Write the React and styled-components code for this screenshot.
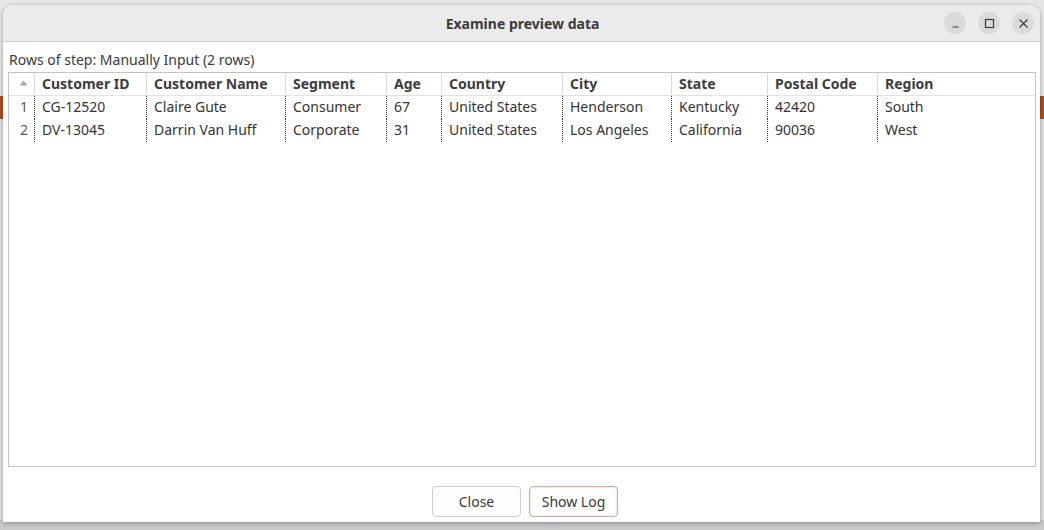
import React from 'react'
import styled, { createGlobalStyle } from 'styled-components'

const GlobalStyle = createGlobalStyle`
  html, body {
    margin: 0;
    padding: 0;
  }
  body {
    font-family: "Noto Sans", "Open Sans", "Liberation Sans", sans-serif;
    font-size: 14px;
    color: #333;
  }
`;

const columns = [
  { key: 'id', label: 'Customer ID' },
  { key: 'name', label: 'Customer Name' },
  { key: 'segment', label: 'Segment' },
  { key: 'age', label: 'Age' },
  { key: 'country', label: 'Country' },
  { key: 'city', label: 'City' },
  { key: 'state', label: 'State' },
  { key: 'postal', label: 'Postal Code' },
  { key: 'region', label: 'Region' },
];

const rows = [
  { id: 'CG-12520', name: 'Claire Gute', segment: 'Consumer', age: '67', country: 'United States', city: 'Henderson', state: 'Kentucky', postal: '42420', region: 'South' },
  { id: 'DV-13045', name: 'Darrin Van Huff', segment: 'Corporate', age: '31', country: 'United States', city: 'Los Angeles', state: 'California', postal: '90036', region: 'West' },
];

const GRID = '26px 112px 139px 101px 55px 121px 109px 96px 110px 1fr';

const Page = styled.div`
  width: 1044px;
  height: 530px;
  box-sizing: border-box;
  display: flex;
  padding: 5px 4px 8px 3px;
  overflow: hidden;
  background: linear-gradient(
    to bottom,
    #e6e6e6 0 96px,
    #b24a22 96px 119px,
    #e0e0e0 119px 520px,
    #c9c9c9 520px
  );
`;

const Dialog = styled.div`
  flex: 1;
  display: flex;
  flex-direction: column;
  background: #fff;
  border-radius: 10px 10px 0 0;
  box-shadow: 0 1px 4px rgba(0, 0, 0, 0.35);
  overflow: hidden;
`;

const TitleBar = styled.div`
  height: 36px;
  flex: none;
  display: grid;
  grid-template-columns: 1fr auto 1fr;
  align-items: center;
  background: #ebebeb;
  border-bottom: 1px solid #cdcdcd;
`;

const Title = styled.div`
  grid-column: 2;
  font-weight: bold;
  font-size: 14px;
  color: #3a3a3a;
  padding-top: 1px;
  padding-left: 2px;
`;

const Controls = styled.div`
  grid-column: 3;
  justify-self: end;
  display: flex;
  gap: 12px;
  padding-right: 6px;
`;

const CtrlButton = styled.div`
  width: 22px;
  height: 22px;
  border-radius: 50%;
  background: #dadada;
  display: flex;
  align-items: center;
  justify-content: center;
  color: #3a3a3a;
`;

const Body = styled.div`
  flex: 1;
  display: flex;
  flex-direction: column;
  padding: 0 4px 0 5px;
  min-height: 0;
`;

const StepLabel = styled.div`
  height: 20px;
  line-height: 20px;
  padding-top: 8px;
  margin-bottom: 2px;
  margin-left: 1px;
  color: #3a3a3a;
`;

const TableBox = styled.div`
  flex: 1;
  border: 1px solid #c4c4c4;
  background: #fff;
`;

const Row = styled.div`
  display: grid;
  grid-template-columns: ${GRID};
  height: ${p => (p.$header ? '22px' : '23px')};
  border-bottom: ${p => (p.$header ? '1px solid #e2e2e2' : 'none')};
`;

const HeadCell = styled.div`
  display: flex;
  align-items: center;
  padding: 0 0 2px 7px;
  font-weight: bold;
  color: #3c3c3c;
  border-right: 1px solid #dcdcdc;
  white-space: nowrap;
  overflow: hidden;
  &:last-child {
    border-right: none;
  }
`;

const SortCell = styled.div`
  display: flex;
  align-items: center;
  justify-content: center;
  padding: 0 0 2px 4px;
  color: #a8a8a8;
  border-right: 1px solid #dcdcdc;
`;

const Cell = styled.div`
  display: flex;
  align-items: center;
  padding: 0 0 2px 7px;
  color: #333;
  border-right: 1px dotted #3a3a3a;
  white-space: nowrap;
  overflow: hidden;
  &:last-child {
    border-right: none;
  }
`;

const NumCell = styled.div`
  display: flex;
  align-items: center;
  justify-content: flex-end;
  padding: 0 6px 2px 0;
  color: #5a5a5a;
  border-right: 1px dotted #3a3a3a;
`;

const Footer = styled.div`
  height: 55px;
  flex: none;
  display: flex;
  justify-content: center;
  align-items: flex-start;
  gap: 8px;
  padding: 19px 0 0 6px;
  box-sizing: border-box;
`;

const Button = styled.button`
  width: 89px;
  height: 31px;
  font-family: inherit;
  font-size: 14px;
  color: #3a3a3a;
  background: #fdfdfd;
  border: 1px solid ${p => (p.$default ? '#cfae9d' : '#cdcdcd')};
  box-shadow: ${p => (p.$default ? 'inset 0 0 0 1px #f6ece6' : 'none')};
  border-radius: 4px;
  padding: 0;
`;

const SortArrow = () => (
  <svg width="9" height="6" viewBox="0 0 9 6">
    <path d="M4.5 0.5L8.5 5.5H0.5Z" fill="currentColor" />
  </svg>
);

const CtrlIcon = ({ type }) => (
  <svg width="11" height="11" viewBox="0 0 11 11" fill="none" stroke="currentColor" strokeWidth="1.2">
    {type === 'min' && <path d="M2.5 9h6" />}
    {type === 'max' && <rect x="1.5" y="1.5" width="8" height="8" />}
    {type === 'close' && <path d="M1.5 1.5l8 8M9.5 1.5l-8 8" />}
  </svg>
);

export default function App() {
  return (
    <Page>
      <GlobalStyle />
      <Dialog>
        <TitleBar>
          <Title>Examine preview data</Title>
          <Controls>
            <CtrlButton><CtrlIcon type="min" /></CtrlButton>
            <CtrlButton><CtrlIcon type="max" /></CtrlButton>
            <CtrlButton><CtrlIcon type="close" /></CtrlButton>
          </Controls>
        </TitleBar>
        <Body>
          <StepLabel>Rows of step: Manually Input (2 rows)</StepLabel>
          <TableBox>
            <Row $header>
              <SortCell><SortArrow /></SortCell>
              {columns.map(c => <HeadCell key={c.key}>{c.label}</HeadCell>)}
            </Row>
            {rows.map((r, i) => (
              <Row key={r.id}>
                <NumCell>{i + 1}</NumCell>
                {columns.map(c => <Cell key={c.key}>{r[c.key]}</Cell>)}
              </Row>
            ))}
          </TableBox>
          <Footer>
            <Button>Close</Button>
            <Button $default>Show Log</Button>
          </Footer>
        </Body>
      </Dialog>
    </Page>
  )
}
